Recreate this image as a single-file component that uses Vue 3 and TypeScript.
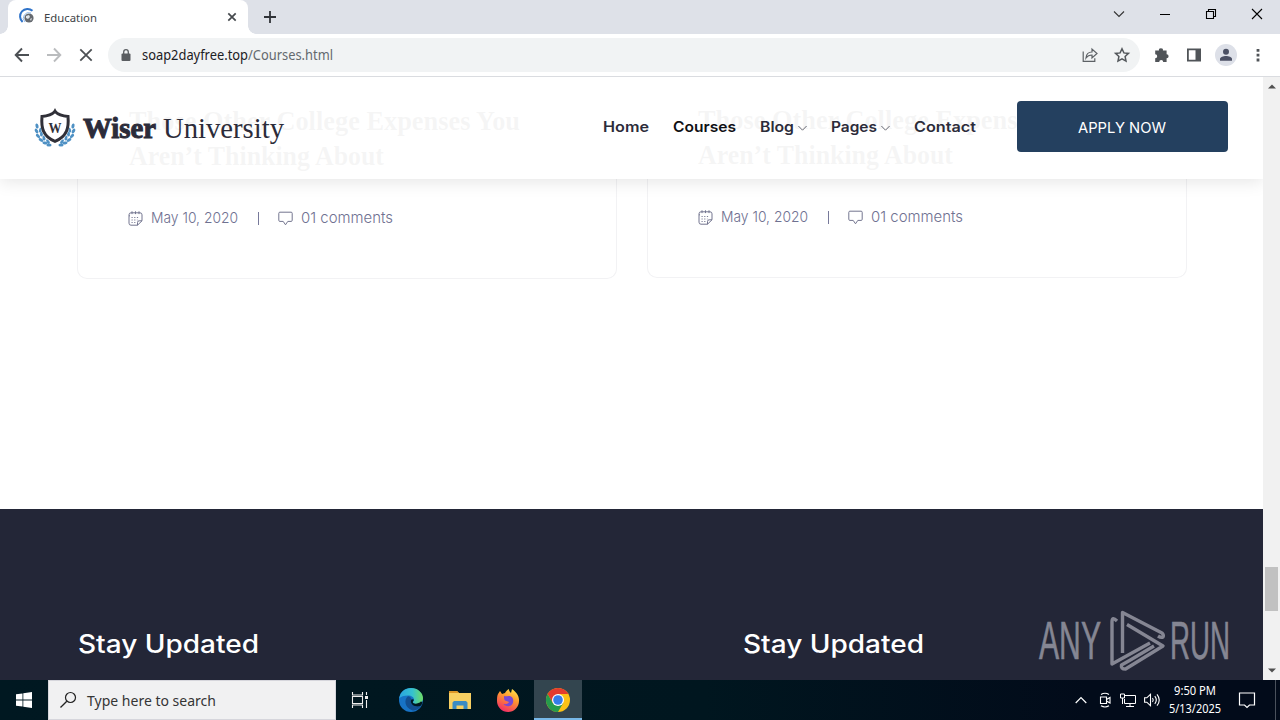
<script setup lang="ts">
import { h } from 'vue'

interface LabelProps { text: string; w: number; h: number; base: number }

// One line of text fitted to a fixed width, with its baseline at `base`.
const Label = (p: LabelProps) =>
  h('svg', { width: p.w, height: p.h, class: 'label' }, [
    h('text', { x: 0, y: p.base, textLength: p.w, lengthAdjust: 'spacingAndGlyphs' }, p.text),
  ])
Label.props = ['text', 'w', 'h', 'base']

const posts = [1, 2]
const leaves = [
  [2, 18, 75], [1.5, 23, 60], [3, 28, 45], [6, 32, 30], [10, 35, 10], [14, 37, 0],
  [5.5, 22, 110], [6.5, 26, 95], [9, 30, 80], [13, 33.5, 60],
]
</script>

<template>
  <div class="screen">
    <div class="tabs">
      <div class="tab">
        <svg class="fav" width="16" height="16" viewBox="0 0 16 16">
          <circle cx="9" cy="9" r="4.6" fill="#65696f" />
          <path d="M6 7l3-1 1 2-2 2-2-1zM10 10l2-1-1 3z" fill="#dfe3e8" />
          <path d="M12.5 1.8A7 7 0 0 0 2.6 13" fill="none" stroke="#2f73c9" stroke-width="2" />
          <path d="M11 4A5.5 5.5 0 0 0 5 13" fill="none" stroke="#8fb9ea" stroke-width="1" />
        </svg>
        <Label class="ui tabname" text="Education" :w="53" :h="16" :base="12" />
        <svg width="10" height="10" viewBox="0 0 10 10"><path d="M1.3 1.3l7.4 7.4M8.7 1.3L1.3 8.7" stroke="#45494d" stroke-width="1.7" /></svg>
      </div>
      <svg class="plus" width="14" height="14" viewBox="0 0 14 14"><path d="M7 1v12M1 7h12" stroke="#303338" stroke-width="1.8" /></svg>
      <div class="wins">
        <svg width="12" height="12" viewBox="0 0 12 12"><path d="M1 3.5l5 5 5-5" fill="none" stroke="#333" stroke-width="1.1" /></svg>
        <svg width="12" height="12" viewBox="0 0 12 12"><path d="M1 6.5h10" stroke="#000" /></svg>
        <svg width="12" height="12" viewBox="0 0 12 12"><path d="M1.5 3.5h7v7h-7zM3.5 3.5v-2h7v7h-2" fill="none" stroke="#000" stroke-width="1.1" /></svg>
        <svg width="12" height="12" viewBox="0 0 12 12"><path d="M1 1l10 10M11 1L1 11" stroke="#000" stroke-width="1.1" /></svg>
      </div>
    </div>

    <div class="toolbar">
      <svg class="nav1" width="16" height="16" viewBox="0 0 16 16"><path d="M15 8H2M8 1.5L1.7 8 8 14.5" fill="none" stroke="#4c5054" stroke-width="1.9" /></svg>
      <svg class="nav2" width="16" height="16" viewBox="0 0 16 16"><path d="M1 8h13M8 1.5L14.3 8 8 14.5" fill="none" stroke="#babcbe" stroke-width="1.9" /></svg>
      <svg class="nav3" width="14" height="14" viewBox="0 0 14 14"><path d="M1.3 1.3l11.4 11.4M12.7 1.3L1.3 12.7" stroke="#4c5054" stroke-width="1.8" /></svg>
      <div class="omni">
        <svg width="10" height="13" viewBox="0 0 10 13"><rect x="0.5" y="4.5" width="9" height="7.5" rx="1" fill="#5a5d61" /><path d="M2.7 5V3a2.3 2.3 0 0 1 4.6 0v2" fill="none" stroke="#5a5d61" stroke-width="1.3" /></svg>
        <div class="url ui">
          <Label class="host" text="soap2dayfree.top" :w="106" :h="20" :base="15" />
          <Label class="path" text="/Courses.html" :w="85" :h="20" :base="15" />
        </div>
        <svg class="share" width="16" height="16" viewBox="0 0 16 16"><path d="M1.2 4.5v9.8h11.6v-3M4 11c.3-4 2.7-6 6-6V2l5 4.5L10 11V8c-2.7 0-4.5.8-6 3z" fill="none" stroke="#5d6165" stroke-width="1.2" /></svg>
        <svg width="16" height="16" viewBox="0 0 16 16"><path d="M8 1.7l1.9 4.2 4.6.5-3.4 3.1.9 4.6L8 11.8l-4 2.3.9-4.6-3.4-3.1 4.600-.5z" fill="none" stroke="#54585c" stroke-width="1.5" /></svg>
      </div>
      <div class="tools">
        <svg width="16" height="16" viewBox="0 0 16 16"><path d="M1.200 3.600h3.800a2 2 0 1 1 3.900 0h3.700v3.700a2 2 0 1 1 0 4V15H9.200a2 2 0 0 0-4 0h-4v-3.700a2 2 0 0 0 0-4z" fill="#505458" /></svg>
        <svg width="16" height="16" viewBox="0 0 16 16"><path d="M1.900 2.400h12.200v11.200H1.900z" fill="none" stroke="#505458" stroke-width="1.8" /><path d="M9.500 2h5v12h-5z" fill="#505458" /></svg>
        <svg class="person" width="22" height="22" viewBox="0 0 22 22"><circle cx="11" cy="11" r="11" fill="#dde0e8" /><circle cx="11" cy="7.7" r="3" fill="#4b5064" /><path d="M5 16.7v-1.6c0-2 3.4-3 6-3s6 1 6 3v1.6z" fill="#4b5064" /></svg>
        <svg width="4" height="16" viewBox="0 0 4 16"><path d="M.6 2h2.800v2.800H.6zM.6 6.800h2.800v2.800H.6zM.6 11.600h2.800v2.800H.6z" fill="#505458" /></svg>
      </div>
    </div>

    <div class="view">
      <main class="page">
        <div class="cards">
          <article v-for="p in posts" :key="p" class="card">
            <Label class="title" text="Those Other College Expenses You" :w="391" :h="35" :base="27" />
            <Label class="title" text="Aren’t Thinking About" :w="255" :h="35" :base="27" />
            <div class="meta">
              <svg width="15" height="15" viewBox="0 0 15 15">
                <path d="M9.500 14.200H3a2 2 0 0 1-2-2V3.800a2 2 0 0 1 2-2h9a2 2 0 0 1 2 2v6zM9.500 14.200v-2.700a1.700 1.700 0 0 1 1.700-1.700H14M1 4.800h1M4 .3v2.800M7.500 .3v2.800M11 .3v2.800" fill="none" stroke="#73758f" />
                <path d="M3.500 6.500h8M3.500 9h6M3.500 11.500h4.500" stroke="#7c7e96" stroke-dasharray="1.2 1.5" />
              </svg>
              <Label class="date" text="May 10, 2020" :w="87" :h="20" :base="15" />
              <span class="bar"></span>
              <svg width="15" height="15" viewBox="0 0 15 15"><path d="M1.900 1.200h11.200q1.100 0 1.100 1.100v7q0 1.100-1.100 1.100H9.800L7.500 13.800 5.200 10.400H1.900Q.8 10.400.8 9.300v-7Q.8 1.200 1.900 1.200z" fill="none" stroke="#73758f" /></svg>
              <Label class="date" text="01 comments" :w="92" :h="20" :base="15" />
            </div>
          </article>
        </div>

        <footer class="foot">
          <Label text="Stay Updated" :w="181" :h="36" :base="28" />
          <Label text="Stay Updated" :w="181" :h="36" :base="28" />
        </footer>

        <header class="head">
          <svg class="crest" width="40" height="40" viewBox="0 0 40 40">
            <g fill="#4f91c4">
              <ellipse v-for="(l, i) in leaves" :key="i" :cx="l[0]" :cy="l[1]" rx="2.6" ry="1.5" :transform="`rotate(${l[2]} ${l[0]} ${l[1]})`" />
              <ellipse v-for="(l, i) in leaves" :key="'r' + i" :cx="40 - l[0]" :cy="l[1]" rx="2.6" ry="1.5" :transform="`rotate(${-l[2]} ${40 - l[0]} ${l[1]})`" />
            </g>
            <path d="M20 2.500c3 4 8 5 13 5.200 1.200 13-1 21-13 26.800C8 28.700 5.800 20.700 7 7.700c5-.2 10-1.200 13-5.200z" fill="#fff" stroke="#fff" stroke-width="3" />
            <path d="M20 3.500c3.500 3.500 8 4.500 13 4.900C34 20 32 28.500 20 33.400 8 28.500 6 20 7 8.400 12 8 16.500 7 20 3.500z" fill="#fff" stroke="#303038" stroke-width="3" />
            <path d="M20 0l2.500 5h-5z" fill="#303038" />
            <text class="crestw" x="20" y="24.500" text-anchor="middle" textLength="13" lengthAdjust="spacingAndGlyphs">W</text>
          </svg>
          <Label class="brand heavy" text="Wiser" :w="73" :h="40" :base="27" />
          <Label class="brand" text="University" :w="121" :h="40" :base="27" />
          <nav class="menu">
            <Label text="Home" :w="46" :h="20" :base="15" />
            <Label class="active" text="Courses" :w="63" :h="20" :base="15" />
            <div class="drop"><Label text="Blog" :w="34" :h="20" :base="15" /><svg width="9" height="8" viewBox="0 0 9 8"><path d="M.4 3l4.100 4.200L8.600 3" fill="none" stroke="#444653" stroke-width=".8" /></svg></div>
            <div class="drop"><Label text="Pages" :w="46" :h="20" :base="15" /><svg width="9" height="8" viewBox="0 0 9 8"><path d="M.4 3l4.100 4.200L8.600 3" fill="none" stroke="#444653" stroke-width=".8" /></svg></div>
            <Label text="Contact" :w="62" :h="20" :base="15" />
          </nav>
          <button class="apply"><Label text="APPLY NOW" :w="88" :h="20" :base="16" /></button>
        </header>

        <svg class="mark" width="194" height="62" viewBox="0 0 194 62">
          <text x="0" y="49" textLength="62" lengthAdjust="spacingAndGlyphs">ANY</text>
          <text x="131" y="49" textLength="60" lengthAdjust="spacingAndGlyphs">RUN</text>
          <g fill="none" stroke="#858693" stroke-width="3.400" stroke-linejoin="round">
            <path d="M78 11q-5-5-5 1v42L111 33" />
            <path d="M83.500 43V2.500L123 23q2 2 1 4-2 1-5-1" />
            <path d="M88 14.500L124 36 86.500 59q-5 0-4-4l8-4.500L115 36" />
          </g>
        </svg>
      </main>
      <aside class="scroll">
        <svg width="8" height="5" viewBox="0 0 8 5"><path d="M0 4.500h8L4 .5z" fill="#505050" /></svg>
        <span class="thumb"></span>
        <svg width="8" height="5" viewBox="0 0 8 5"><path d="M0 .5h8L4 4.500z" fill="#505050" /></svg>
      </aside>
    </div>

    <div class="task">
      <div class="start"><svg width="16" height="16" viewBox="0 0 16 16"><path d="M0 2.300l6.500-.9v6.200H0zM7.300 1.300L16 0v7.600H7.300zM0 8.400h6.500v6.200L0 13.700zM7.300 8.400H16V16l-8.700-1.300z" fill="#fff" /></svg></div>
      <div class="search">
        <svg width="18" height="18" viewBox="0 0 18 18"><circle cx="10.500" cy="6.500" r="5" fill="none" stroke="#222" stroke-width="1.200" /><path d="M6.800 10.200L.5 16.500" stroke="#222" stroke-width="1.300" /></svg>
        <Label class="ui find" text="Type here to search" :w="129" :h="22" :base="16" />
      </div>
      <div class="cell"><svg width="18" height="18" viewBox="0 0 18 18"><path d="M1.500 1v3h10V1M1.500 17v-3h10v3M1.500 5.500h10v7h-10zM15.500 1v3M15.500 9v8" fill="none" stroke="#eee" stroke-width="1.100" /><path d="M14 5h3v3h-3z" fill="#eee" /></svg></div>
      <div class="cell edge"><svg width="24" height="24" viewBox="0 0 24 24">
        <defs><linearGradient id="eg" x1="0" x2="1"><stop offset="0" stop-color="#2aa4df" /><stop offset=".55" stop-color="#35c1d0" /><stop offset="1" stop-color="#6fdd63" /></linearGradient></defs>
        <circle cx="12" cy="12" r="12" fill="#1773c6" />
        <path d="M.2 10.500C1 4 6 0 12 0c7 0 12 5 12 10 0 4-3 6-6 6-2.500 0-4-.8-4-1.800 0-.8 1-1.200 1-2.800 0-2-2.500-4-6-4C5 7.400 1.500 8.500.2 10.500z" fill="url(#eg)" />
        <path d="M9 8.200c-4.500 3.500-3 11.500 4 14 3.500.8 7.500-1.200 9.300-4.700-3 1.500-6.300 1.200-8.600-.5-2-1.500-2.300-4-1-5.600C12 9.500 11 8.300 9 8.200z" fill="#124f91" />
        <path d="M12.800 11.300c-1.500 1.700-1.300 4 .9 5.700 2.300 1.700 5.600 2 8.600.5L23.500 14l-1.700-.5c-2 2.500-8 3-8 .5 0-.8 1-1 1-2.500z" fill="#001821" />
      </svg></div>
      <div class="cell"><svg width="22" height="18" viewBox="0 0 22 18"><path d="M0 0h8l2 2h12v16H0z" fill="#f7cf62" /><path d="M0 0h8l2 2H0z" fill="#dc9627" /><path d="M3.500 18v-6.500l1.500-1.500h12l1.500 1.500V18h-4v-3.500h-7V18z" fill="#3b8bc4" /></svg></div>
      <div class="cell"><svg width="24" height="24" viewBox="0 0 24 24">
        <defs><linearGradient id="fg" x1=".8" y1="0" x2=".3" y2="1"><stop offset="0" stop-color="#ffe64b" /><stop offset=".4" stop-color="#ff9830" /><stop offset="1" stop-color="#f22a67" /></linearGradient></defs>
        <path d="M2 6l2-3 2 3 3-1c1-2 2-3 4-4-.3 2 1 3 2 4l1-4c4 3 7.500 7 7 12a11 11 0 0 1-22 0c0-3 0-5 1-7z" fill="url(#fg)" />
        <path d="M8 8c3 1 4-1 7 .5 3 1.500 3 7 0 9-3 1.500-6 .5-7.500-1.500 3 .5 5-.5 5.500-2l-4-1.500c-1-1-1-2-1-4.500z" fill="#7948d4" />
      </svg></div>
      <div class="cell on"><svg width="24" height="24" viewBox="0 0 24 24">
        <circle cx="12" cy="12" r="12" fill="#fbc116" />
        <path d="M1.600 6A12 12 0 0 1 22.400 6H12v6L6.800 15z" fill="#e33b2e" />
        <path d="M1.600 6A12 12 0 0 0 12 24l5.200-9-5.200-3-5.200 3z" fill="#269b4c" />
        <circle cx="12" cy="12" r="6" fill="#fff" /><circle cx="12" cy="12" r="4.800" fill="#347de9" />
      </svg></div>
      <div class="tray">
        <svg width="12" height="8" viewBox="0 0 12 8"><path d="M.7 7L6 1.500 11.300 7" fill="none" stroke="#fff" stroke-width="1.200" /></svg>
        <svg class="cam" width="12" height="16" viewBox="0 0 12 16"><path d="M1.500 5h6v6.500h-6zM7.500 7.500L11 5.500v5.500L7.500 9M2 2.500Q6 0 10 2.500M2 13.700q4 2.500 8 0" fill="none" stroke="#fff" stroke-width="1.100" /></svg>
        <svg width="16" height="14" viewBox="0 0 16 14"><path d="M5 2.500h10.500v8H4.500V6M10 10.500v3M6 13.500h8M.5 1h4v4h-4zM2.500 5v6" fill="none" stroke="#fff" /></svg>
        <svg width="17" height="14" viewBox="0 0 17 14"><path d="M.6 4.800h2.200L6.500 1.300v11.400L2.800 9.200H.6zM8.500 5q1.500 2 0 4M10.800 3.200q3 3.800 0 7.600M13 1.300q4.500 5.700 0 11.400" fill="none" stroke="#fff" stroke-width="1.100" /></svg>
        <div class="clock ui">
          <Label text="9:50 PM" :w="42" :h="18" :base="13" />
          <Label text="5/13/2025" :w="52" :h="18" :base="13" />
        </div>
        <svg class="note" width="18" height="17" viewBox="0 0 18 17"><path d="M1.500 1h15v12h-5L9 15.500 6.500 13h-5z" fill="none" stroke="#fff" stroke-width="1.200" /></svg>
        <span class="peek"></span>
      </div>
    </div>
  </div>
</template>

<style>
body { margin: 0; overflow: hidden; }
</style>

<style scoped>
.screen { width: 1280px; height: 720px; display: flex; flex-direction: column; overflow: hidden; background: #fff; font-family: Inter, "Liberation Sans", sans-serif; }
.screen * { box-sizing: border-box; }
svg { display: block; flex: none; overflow: visible; }
.label { display: block; flex: none; overflow: visible; fill: currentColor; }
.ui { font-family: "Noto Sans", "Open Sans", sans-serif; }
.tabs { height: 34px; background: #dee1e8; display: flex; align-items: center; padding-left: 8px; }
.tab { position: relative; width: 240px; height: 34px; background: #fff; border-radius: 8px 8px 0 0; display: flex; align-items: center; padding: 0 11px 0 12px; justify-content: space-between; }
.tab::before, .tab::after { content: ""; position: absolute; bottom: 0; width: 8px; height: 8px; }
.tab::before { left: -8px; background: radial-gradient(circle at 0 0, #dee1e8 7.500px, #fff 8px); }
.tab::after { right: -8px; background: radial-gradient(circle at 100% 0, #dee1e8 7.500px, #fff 8px); }
.tabname { font-size: 11.500px; color: #404347; margin: 1px auto 0 8px; }
.plus { margin-left: 15px; }
.wins { display: flex; gap: 34px; margin: -6px 17px 0 auto; }
.toolbar { height: 43px; border-bottom: 1px solid #dadce0; display: flex; align-items: center; padding-left: 14px; }
.nav2 { margin-left: 16px; }
.nav3 { margin-left: 17px; }
.omni { width: 1032px; height: 34px; margin-left: 15px; border-radius: 17px; background: #f1f3f4; display: flex; align-items: center; padding: 0 10px 0 13px; }
.url { display: flex; margin-left: 11px; font-size: 13.500px; }
.host { color: #1c2024; }
.path { color: #64696e; }
.share { margin: 0 16px 0 auto; }
.tools { display: flex; align-items: center; gap: 16px; margin-left: 14px; }
.tools .person { margin: 0 3px 0 -3px; }
.view { height: 603px; display: flex; }
.page { width: 1263px; height: 603px; position: relative; overflow: hidden; }
.cards { height: 432px; padding: 0 0 0 77px; display: flex; gap: 30px; }
.card { width: 540px; height: 202px; border: 1px solid #f2f2f4; border-top: 0; border-radius: 0 0 10px 10px; padding: 26px 0 0 50px; }
.card + .card { height: 201px; padding-top: 25px; }
.title { font-family: "Liberation Serif", serif; font-weight: 700; font-size: 27px; color: #1f1f25; margin-left: 1px; }
.card + .card .title { margin-left: 0; }
.meta { display: flex; align-items: center; height: 20px; margin: 35px 0 0 -.5px; color: #6f7191; font-size: 15px; font-weight: 300; }
.meta .date { margin-left: 8px; }
.bar { width: 1px; height: 13px; margin: 0 19px 0 20px; background: #77799a; }
.foot { height: 171px; background: #232637; color: #fff; display: flex; gap: 484px; padding: 116px 0 0 77.500px; font-size: 25px; font-weight: 500; }
.head { position: absolute; left: 0; top: 0; width: 1263px; height: 102px; background: rgba(255, 255, 255, .955); box-shadow: 0 3px 16px rgba(0, 0, 0, .1); display: flex; align-items: center; padding-left: 35px; color: #2c2c3a; }
.crest { margin-right: 8px; }
.crestw { font: 700 15px "Liberation Serif", serif; fill: #303038; }
.brand { font-family: "Liberation Serif", serif; font-size: 29px; margin-top: 6px; }
.heavy { font-weight: 700; margin-right: 7px; stroke: currentColor; stroke-width: 1px; }
.menu { display: flex; align-items: center; gap: 24px; margin: -2px 0 0 319px; font-size: 14.500px; font-weight: 600; }
.active { color: #101014; }
.drop { display: flex; align-items: center; gap: 4px; }
.apply { width: 211px; height: 51px; margin: -3px 0 0 41px; padding: 0 1px 0 0; border: 0; border-radius: 4px; background: #24405f; color: #fff; font: 400 15px Inter, sans-serif; display: flex; align-items: center; justify-content: center; }
.mark { position: absolute; left: 1039px; top: 533px; font: 53px "Liberation Sans", sans-serif; fill: #858693; }
.mark text { stroke: #858693; stroke-width: .6px; }
.scroll { width: 17px; background: #f1f1f1; display: flex; flex-direction: column; align-items: center; padding: 7px 0; }
.thumb { width: 13px; height: 44px; background: #c1c1c1; margin: 478px 0 auto; }
.task { height: 40px; background: linear-gradient(90deg, #001821, #00161f 55%, #020b1a 85%); display: flex; }
.start { width: 48px; display: flex; align-items: center; justify-content: center; }
.search { width: 288px; background: #f1f1f2; border: 1px solid #d6d6dc; display: flex; align-items: center; padding-left: 11px; }
.find { font-size: 14.500px; color: #353535; margin: 2px 0 0 9px; }
.cell { width: 48px; display: flex; align-items: center; justify-content: center; }
.edge { width: 54px; margin-right: -2px; }
.cell.on { background: #33454f; box-shadow: inset 0 -2px #78b8e8; margin-left: 2px; }
.tray { flex: 1; display: flex; align-items: center; justify-content: flex-end; gap: 8px; color: #fff; }
.tray > svg:first-child { margin-right: 5px; }
.tray .cam { margin-right: 1px; margin-left: -1px; }
.clock { display: flex; flex-direction: column; align-items: center; font-size: 12px; }
.note { margin: 0 11px 0 9px; }
.peek { width: 1px; height: 40px; background: #4a515c; margin-right: 4px; }
</style>
